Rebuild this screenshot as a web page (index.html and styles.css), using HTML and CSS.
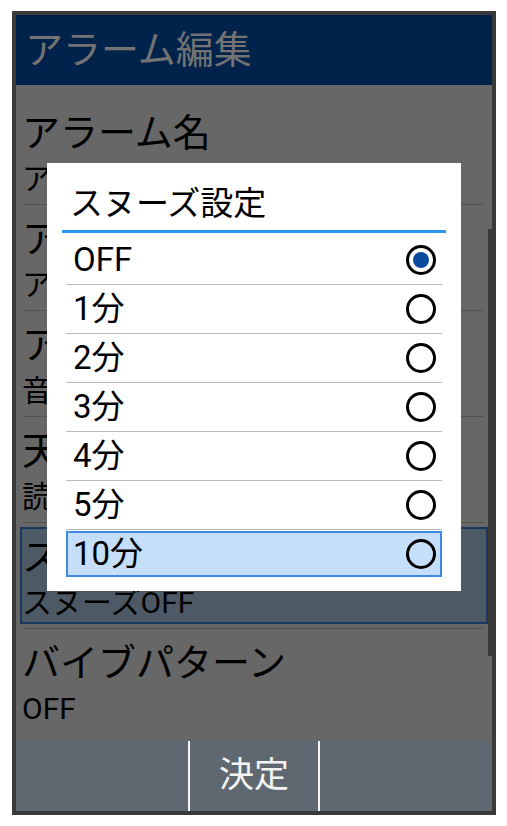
FILE: index.html
```html
<!DOCTYPE html>
<html lang="ja">
<head>
<meta charset="utf-8">
<title>アラーム編集</title>
<link rel="stylesheet" href="styles.css">
</head>
<body>
<div class="phone">
  <header class="appbar">アラーム編集</header>
  <main class="content">
    <div class="list">
      <div class="row"><div class="row-title">アラーム名</div><div class="row-sub">アラーム</div></div>
      <div class="sep"></div>
      <div class="row"><div class="row-title">アラーム時刻</div><div class="row-sub">アラーム 7:00</div></div>
      <div class="sep"></div>
      <div class="row"><div class="row-title">アラーム音</div><div class="row-sub">音量 3</div></div>
      <div class="sep"></div>
      <div class="row"><div class="row-title">天気読み上げ</div><div class="row-sub">読み上げない</div></div>
      <div class="sep"></div>
      <div class="row focused"><div class="row-title">スヌーズ</div><div class="row-sub">スヌーズOFF</div></div>
      <div class="sep"></div>
      <div class="row"><div class="row-title">バイブパターン</div><div class="row-sub">OFF</div></div>
    </div>
    <div class="scrollbar"></div>
  </main>
  <footer class="softkeys">
    <span class="key"></span>
    <i class="keybar"></i>
    <span class="key">決定</span>
    <i class="keybar"></i>
    <span class="key"></span>
  </footer>

  <div class="dialog">
    <div class="dialog-title">スヌーズ設定</div>
    <div class="dialog-rule"></div>
    <div class="options">
      <div class="option"><span>OFF</span><span class="radio checked"></span></div>
      <div class="option"><span>1分</span><span class="radio"></span></div>
      <div class="option"><span>2分</span><span class="radio"></span></div>
      <div class="option"><span>3分</span><span class="radio"></span></div>
      <div class="option"><span>4分</span><span class="radio"></span></div>
      <div class="option"><span>5分</span><span class="radio"></span></div>
      <div class="option selected"><span>10分</span><span class="radio"></span></div>
    </div>
  </div>
</div>
</body>
</html>
```

FILE: styles.css
```css
* { box-sizing: border-box; }

html, body {
  margin: 0;
  padding: 0;
  background: #ffffff;
}

body {
  font-family: Roboto, "Noto Sans CJK JP", sans-serif;
  color: #000;
}

.phone {
  position: relative;
  margin: 11px 0 0 12px;
  width: 484px;
  height: 804px;
  border: 4px solid #3a3a3a;
  display: flex;
  flex-direction: column;
  background: #676767;
}

.appbar {
  height: 70px;
  flex: none;
  background: #01224a;
  color: #737373;
  font-size: 38px;
  line-height: 70px;
  padding-left: 9px;
  white-space: nowrap;
}

.content {
  position: relative;
  flex: 1;
  background: #676767;
  overflow: hidden;
}

.list {
  padding-top: 14px;
}

.row {
  position: relative;
  height: 105px;
  padding: 12px 0 0 6px;
  white-space: nowrap;
}

.row-title {
  position: relative;
  font-size: 38px;
  line-height: 44px;
}

.row-sub {
  position: relative;
  font-size: 30px;
  line-height: 48px;
}

.row.focused::before {
  content: "";
  position: absolute;
  top: 4px;
  left: 4px;
  right: 4px;
  bottom: 4px;
  background: #4e5966;
  border: 2px solid #19375f;
}

.sep {
  height: 1px;
  margin: 0 8px 0 7px;
  background: #525252;
}

.scrollbar {
  position: absolute;
  right: 0;
  top: 144px;
  width: 4px;
  height: 427px;
  background: #3a3a3a;
}

.softkeys {
  height: 70px;
  flex: none;
  background: #5f6870;
  display: grid;
  grid-template-columns: 1fr 2px 128px 2px 1fr;
}

.keybar {
  background: #f4f4f4;
}

.key {
  color: #f3f3f3;
  font-size: 35px;
  line-height: 70px;
  text-align: center;
}

.dialog {
  position: absolute;
  left: 31px;
  top: 148px;
  width: 414px;
  height: 428px;
  background: #ffffff;
}

.dialog-title {
  font-size: 33px;
  line-height: 40px;
  padding: 21px 0 6px 23px;
  white-space: nowrap;
}

.dialog-rule {
  height: 3px;
  margin: 0 15px;
  background: #2a98f0;
}

.options {
  margin: 3px 19px 0;
}

.option {
  height: 49px;
  display: flex;
  align-items: center;
  justify-content: space-between;
  padding: 0 6px 0 7px;
  border-bottom: 1px solid #b6baba;
  font-size: 33px;
  line-height: 48px;
}

.option.selected {
  height: 46px;
  margin-top: 1px;
  border: 2px solid #3f8be2;
  background: #c5defa;
  padding: 0 4px 0 5px;
}

.radio {
  width: 30px;
  height: 30px;
  border: 3px solid #000;
  border-radius: 50%;
  display: flex;
  align-items: center;
  justify-content: center;
  flex: none;
}

.radio.checked::after {
  content: "";
  width: 16px;
  height: 16px;
  border-radius: 50%;
  background: #0b4a9c;
}
```
